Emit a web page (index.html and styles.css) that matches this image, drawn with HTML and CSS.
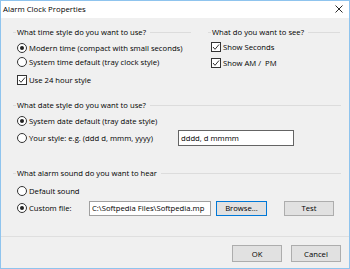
FILE: index.html
```html
<!DOCTYPE html>
<html>
<head>
<meta charset="utf-8">
<link rel="stylesheet" href="styles.css">
</head>
<body>
<div class="window">
  <div class="titlebar">
    <span class="title">Alarm Clock Properties</span>
    <svg class="close" width="8" height="8" viewBox="0 0 8 8"><path d="M0.5 0.5 L7.5 7.5 M7.5 0.5 L0.5 7.5" stroke="#2b2b2b" stroke-width="1"/></svg>
  </div>
  <div class="body">
    <div class="top">
      <section class="group g-time">
        <div class="ghead"><span>What time style do you want to use?</span></div>
        <div class="opt t1"><span class="radio on"></span>Modern time (compact with small seconds)</div>
        <div class="opt t2"><span class="radio"></span>System time default (tray clock style)</div>
        <div class="opt t3"><span class="check"><svg width="10" height="10" viewBox="0 0 10 10"><rect x="0.5" y="0.5" width="9" height="9" fill="#fff" stroke="#333"/><path d="M2 5 L4 7.3 L8 2.5" fill="none" stroke="#333" stroke-width="1"/></svg></span>Use 24 hour style</div>
      </section>
      <section class="group g-see">
        <div class="ghead"><span>What do you want to see?</span></div>
        <div class="opt s1"><span class="check"><svg width="10" height="10" viewBox="0 0 10 10"><rect x="0.5" y="0.5" width="9" height="9" fill="#fff" stroke="#333"/><path d="M2 5 L4 7.3 L8 2.5" fill="none" stroke="#333" stroke-width="1"/></svg></span>Show Seconds</div>
        <div class="opt s2"><span class="check"><svg width="10" height="10" viewBox="0 0 10 10"><rect x="0.5" y="0.5" width="9" height="9" fill="#fff" stroke="#333"/><path d="M2 5 L4 7.3 L8 2.5" fill="none" stroke="#333" stroke-width="1"/></svg></span>Show AM /&nbsp; PM</div>
      </section>
    </div>
    <section class="group g-date">
      <div class="ghead"><span>What date style do you want to use?</span></div>
      <div class="opt d1"><span class="radio on"></span>System date default (tray date style)</div>
      <div class="row d2">
        <div class="opt"><span class="radio"></span>Your style: e.g. (ddd d, mmm, yyyy)</div>
        <div class="field">dddd, d mmmm</div>
      </div>
    </section>
    <section class="group g-sound">
      <div class="ghead"><span>What alarm sound do you want to hear</span></div>
      <div class="opt a1"><span class="radio"></span>Default sound</div>
      <div class="row a2">
        <div class="opt"><span class="radio on"></span>Custom file:</div>
        <div class="field file">C:\Softpedia Files\Softpedia.mp</div>
        <div class="btn default">Browse...</div>
        <div class="btn test">Test</div>
      </div>
    </section>
  </div>
  <div class="footer">
    <div class="btn">OK</div>
    <div class="btn">Cancel</div>
  </div>
</div>
</body>
</html>
```
FILE: styles.css
```css
* { box-sizing: border-box; }
html, body { margin: 0; padding: 0; background: #f0f0f0; }
body {
  font-family: "Open Sans", "Noto Sans", sans-serif;
  font-size: 7.7px;
  color: #000;
}
.window {
  width: 350px;
  height: 269px;
  border: 1px solid #8fc4ee;
  display: flex;
  flex-direction: column;
  background: #f0f0f0;
}
.titlebar {
  height: 17px;
  background: #fff;
  display: flex;
  align-items: center;
  justify-content: space-between;
  padding: 0 6px 0 2px;
}
.title { font-size: 7.8px; line-height: 17px; }
.close { display: block; margin-top: -1px; }
.body {
  flex: 1;
  padding: 8px 8px 0 12px;
}
.top { display: flex; gap: 17px; }
.g-time { width: 178px; }
.g-see { width: 132px; }
.ghead {
  display: flex;
  align-items: center;
  height: 12px;
  line-height: 12px;
  white-space: nowrap;
}
.ghead::before {
  content: "";
  width: 3px;
  height: 1px;
  background: #dcdcdc;
  margin-right: 1px;
}
.ghead::after {
  content: "";
  flex: 1;
  height: 1px;
  background: #dcdcdc;
  margin-left: 4px;
}
.opt {
  display: flex;
  align-items: center;
  height: 14px;
  white-space: nowrap;
  padding-left: 4px;
}
.radio {
  width: 10px;
  height: 10px;
  border: 1px solid #333;
  border-radius: 50%;
  background: #fff;
  margin-right: 2px;
  display: flex;
  align-items: center;
  justify-content: center;
  flex: none;
}
.radio.on::after {
  content: "";
  width: 4px;
  height: 4px;
  border-radius: 50%;
  background: #222;
}
.check { width: 10px; height: 10px; margin-right: 2px; flex: none; }
.check svg { display: block; }
.t1 { margin-top: 3px; }
.t3 { margin-top: 4px; }
.g-see .opt { padding-left: 3px; }
.s1 { margin-top: 2px; }
.s2 { margin-top: 2px; }
.g-date { margin-top: 12px; }
.d1 { margin-top: 3px; }
.row { display: grid; align-items: center; }
.d2 { grid-template-columns: 165px 116px; height: 16px; margin-top: 2px; }
.field {
  height: 16px;
  background: #fff;
  border: 1px solid #7a7a7a;
  padding: 0 2px;
  line-height: 14px;
  white-space: nowrap;
  overflow: hidden;
}
.d2 .field { border-color: #646464; }
.g-sound { margin-top: 21px; }
.a1 { margin-top: 5px; }
.a2 {
  grid-template-columns: 71px 122px 51px 62px;
  column-gap: 5px;
  height: 16px;
  margin-top: 2px;
}
.a2 .btn.test { justify-self: end; width: 50px; }
.a2 .field { height: 15px; line-height: 13px; border-color: #a0a0a0; }
.btn {
  height: 16px;
  background: #e1e1e1;
  border: 1px solid #adadad;
  display: flex;
  align-items: center;
  justify-content: center;
  white-space: nowrap;
}
.btn.default { border-color: #0078d7; height: 15px; }
.btn.test { height: 15px; }
.footer {
  height: 32px;
  border-top: 1px solid #dfdfdf;
  display: flex;
  justify-content: flex-end;
  align-items: flex-start;
  gap: 9px;
  padding: 8px 8px 0 0;
}
.footer .btn { width: 50px; height: 17px; }
```
